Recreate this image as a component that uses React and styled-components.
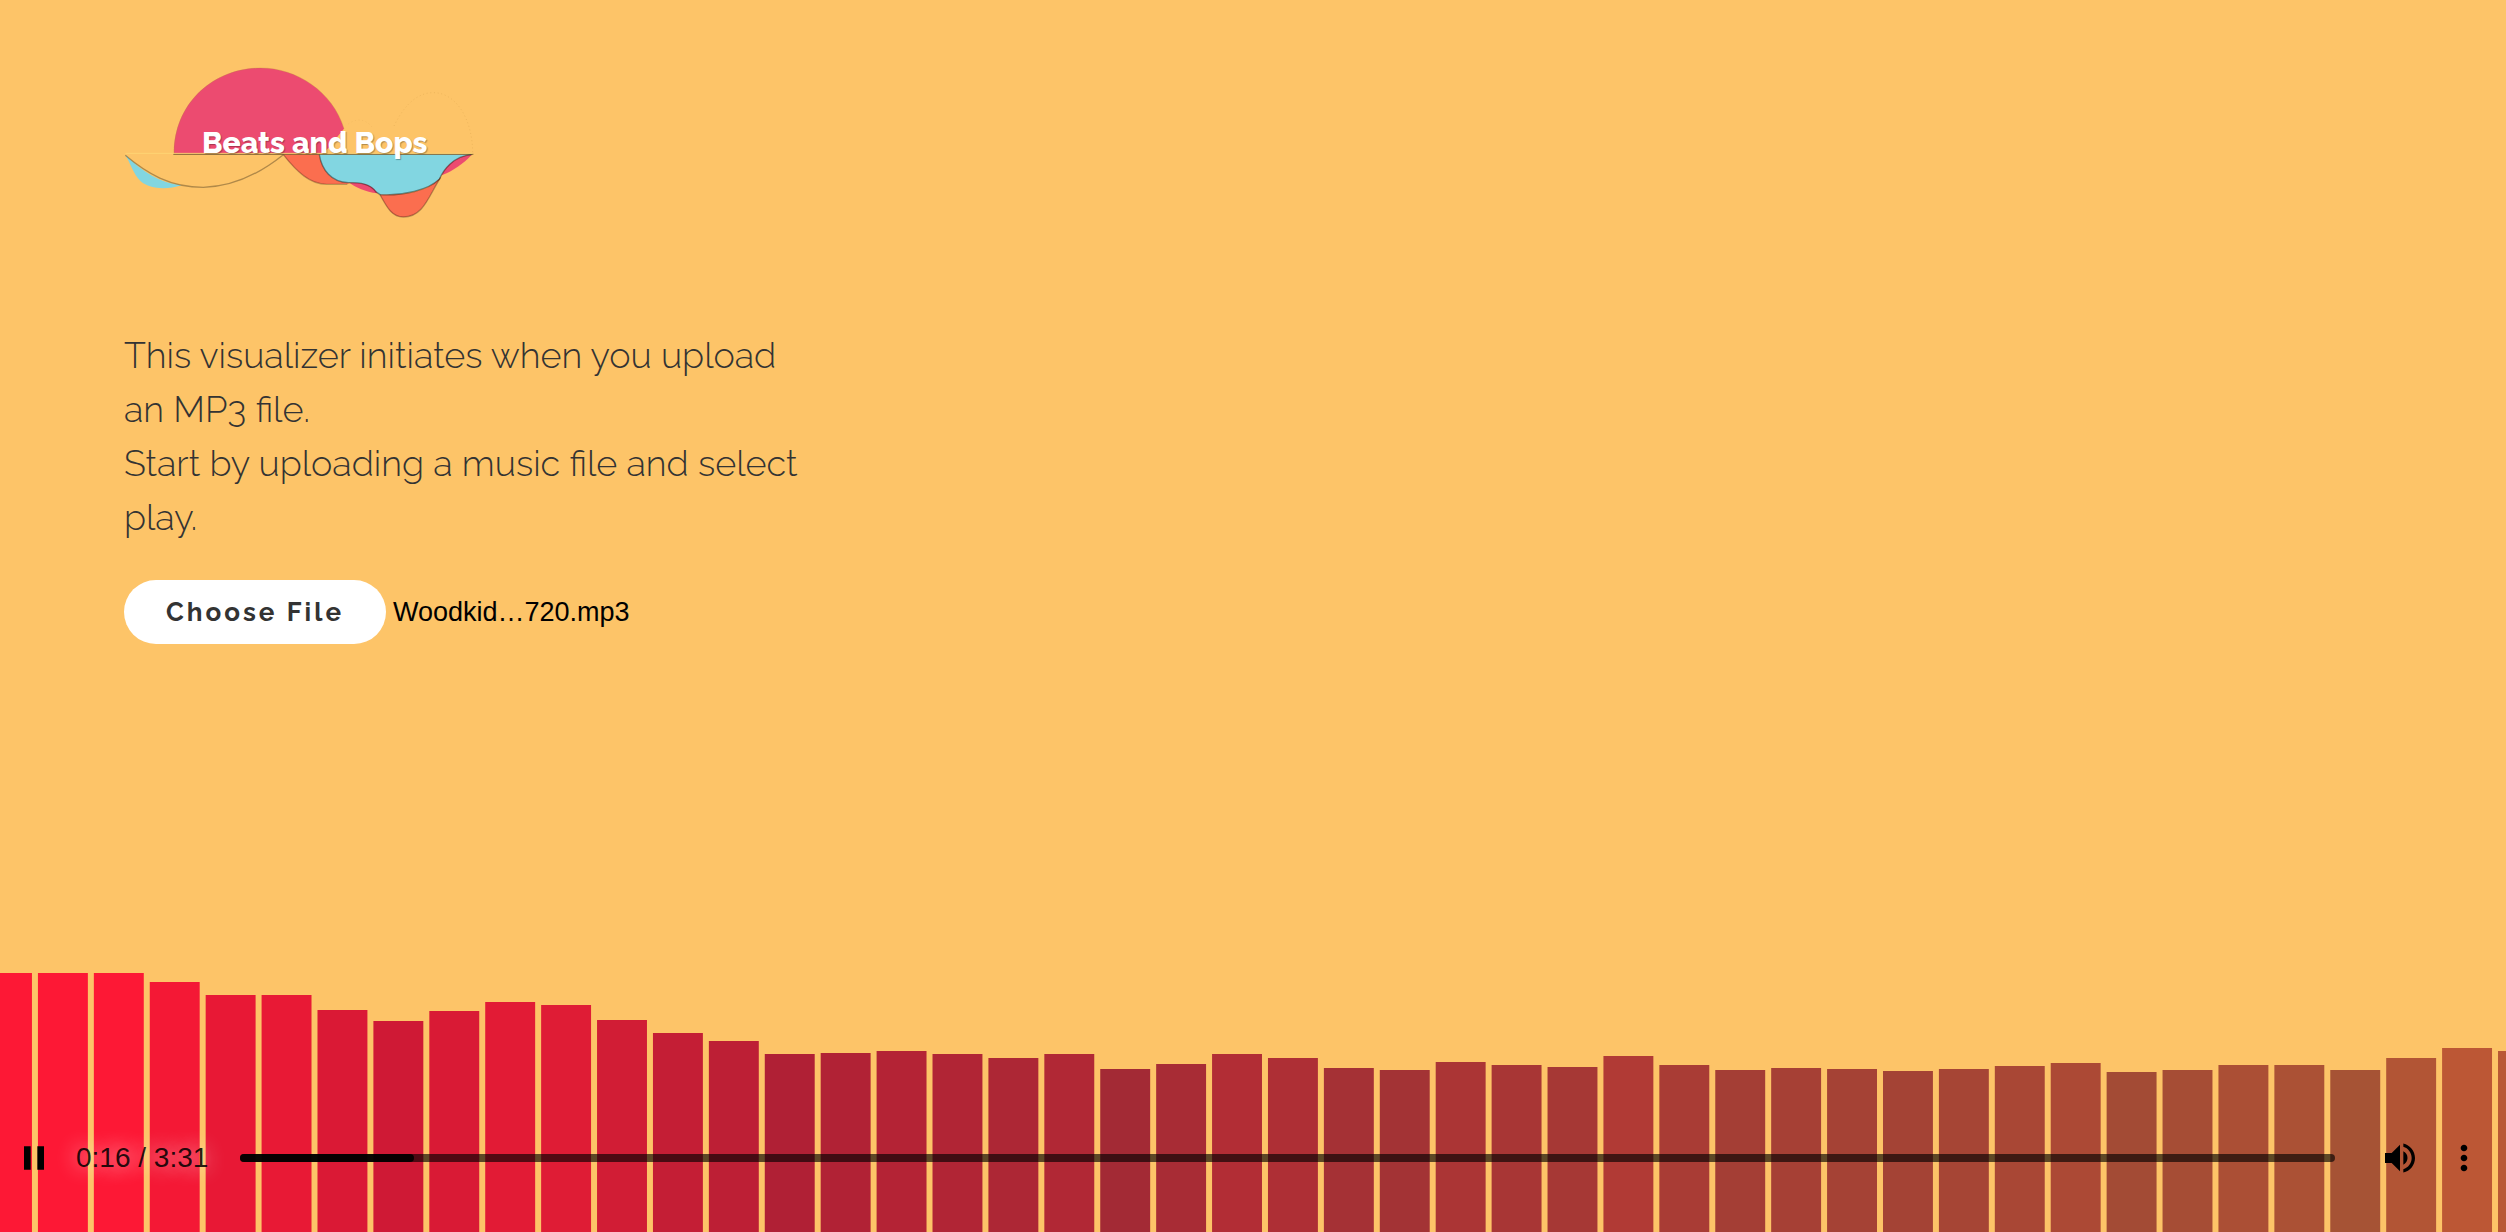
import React, { useRef, useState } from "react";
import styled, { createGlobalStyle } from "styled-components";
import { MdPause, MdPlayArrow, MdVolumeUp, MdVolumeOff, MdMoreVert } from "react-icons/md";

const GlobalStyle = createGlobalStyle`
  *, *::before, *::after { box-sizing: border-box; }
  body {
    margin: 0;
    background: #fdc468;
    font-family: Raleway, Lato, "Open Sans", sans-serif;
  }
`;

const Page = styled.div`
  min-height: 100vh;
  display: flex;
  flex-direction: column;
  justify-content: space-between;
  overflow: hidden;
`;

const Intro = styled.main`
  padding: 66px 124px 0;
`;

const Brand = styled.header`
  display: grid;
  width: max-content;

  > * { grid-area: 1 / 1; }
`;

const Artwork = styled.svg`
  display: block;
  width: 352px;
  height: 154px;
`;

const BrandName = styled.h1`
  margin: 0;
  padding: 59px 0 0 78px;
  color: #fff;
  font-size: 30px;
  line-height: 36px;
  font-weight: 800;
  text-shadow: 1px 1px 1px rgba(0, 0, 0, 0.3);
`;

const Lead = styled.p`
  max-width: 690px;
  margin: 108px 0 36px;
  color: #333;
  font-size: 36px;
  line-height: 54px;
  font-weight: 300;
`;

const Picker = styled.div`
  display: flex;
  align-items: center;
  gap: 7px;
`;

const PickButton = styled.button`
  width: 262px;
  height: 64px;
  border: 0;
  border-radius: 32px;
  background: #fff;
  color: #333;
  font: 700 26px/32px Raleway, Lato, "Open Sans", sans-serif;
  letter-spacing: 3px;
  cursor: pointer;
`;

const FileName = styled.output`
  color: #000;
  font: 27px/32px "Liberation Sans", Arial, sans-serif;
`;

const Stage = styled.section`
  display: grid;

  > * { grid-area: 1 / 1; }
`;

const Spectrum = styled.svg`
  display: block;
  width: 100%;
  height: 260px;
`;

const Controls = styled.div`
  align-self: end;
  position: relative;
  display: flex;
  align-items: center;
  padding: 0 10px 42px 2px;
`;

const IconButton = styled.button`
  display: grid;
  place-items: center;
  flex: none;
  width: 64px;
  height: 64px;
  padding: 0;
  border: 0;
  background: none;
  color: #000;
  font-size: 40px;
  cursor: pointer;
`;

const Time = styled.span`
  flex: none;
  width: 164px;
  padding-left: 10px;
  color: rgba(0, 0, 0, 0.87);
  font: 28px/32px "Liberation Sans", Arial, sans-serif;
  text-shadow: 0 0 20px rgba(255, 255, 255, 0.9);
  white-space: nowrap;
`;

const Timeline = styled.div`
  flex: 1;
  display: grid;
  height: 8px;
  margin: 0 33px 0 10px;
  border-radius: 4px;
  background: rgba(0, 0, 0, 0.63);

  > * { grid-area: 1 / 1; }
`;

const Played = styled.div`
  height: 8px;
  border-radius: 4px;
  background: rgba(0, 0, 0, 0.9);
`;

const Seek = styled.input`
  appearance: none;
  width: 100%;
  height: 8px;
  margin: 0;
  background: transparent;
  cursor: pointer;

  &::-webkit-slider-thumb {
    appearance: none;
    width: 8px;
    height: 8px;
    background: transparent;
  }
`;

const BAR_STEP = 56;
const BAR_WIDTH = 50;
const BINS = 128;

const levels = [
  259, 259, 259, 250, 237, 237, 222, 211, 221, 230, 227, 212, 199, 191, 178,
  179, 181, 178, 174, 178, 163, 168, 178, 174, 164, 162, 170, 167, 165, 176,
  167, 162, 164, 163, 161, 163, 166, 169, 160, 162, 167, 167, 162, 174, 184,
  181,
];

function barColor(level, i) {
  const red = Math.min(255, Math.round(level * 0.975 + (25 * i) / BINS));
  const green = Math.round(Math.cbrt(24 ** 3 + ((250 * i) / BINS) ** 3));
  return `rgb(${red}, ${green}, 53)`;
}

function Bars() {
  return (
    <Spectrum viewBox="0 0 2510 260" preserveAspectRatio="none" role="img" aria-label="Frequency spectrum">
      {levels.map((level, i) => (
        <rect
          key={i}
          x={i * BAR_STEP - 18}
          y={260 - level}
          width={BAR_WIDTH}
          height={level}
          fill={barColor(level, i)}
        />
      ))}
    </Spectrum>
  );
}

function Waves() {
  return (
    <Artwork viewBox="42 48 1056 462" aria-hidden="true" fill="none">
      <path d="M192 310C192 160 310 54 452 54C560 54 668 125 702 236C680 262 660 290 640 310Z" fill="#ec4b70" />
      <path d="M192 310C192 160 310 54 452 54C560 54 668 125 702 236" stroke="#b8863c" strokeOpacity=".45" strokeWidth="2" />
      <path d="M46 316C100 366 150 400 214 406C170 420 120 418 92 394C68 370 62 340 46 316Z" fill="#82d6e1" />
      <path d="M520 314C560 365 600 402 650 402L712 402L722 398C660 390 635 350 628 314Z" fill="#fb6e4f" />
      <path d="M628 314C635 360 665 397 715 398C750 398 780 400 797 425L810 434C880 438 955 420 988 388C1000 360 1030 318 1085 314Z" fill="#82d6e1" />
      <path d="M718 398C738 412 765 425 802 430C785 400 755 398 718 398Z" fill="#ec4b70" />
      <path d="M810 434C830 470 845 501 880 501C940 501 955 440 992 382C950 430 880 436 810 434Z" fill="#fb6e4f" />
      <path d="M1085 314C1040 318 1008 345 995 376C1030 362 1062 340 1085 314Z" fill="#ec4b70" />
      <g stroke="#000" strokeOpacity=".4" strokeWidth="4">
        <path d="M190 313H1090" />
        <path d="M46 316C110 370 180 412 280 412C370 410 450 370 520 314" strokeOpacity=".3" />
        <path d="M520 314C560 365 600 403 650 403H712" strokeOpacity=".25" />
        <path d="M628 314C635 360 665 397 715 398C750 398 780 400 797 425L810 434C880 438 955 420 988 388C1000 360 1030 318 1085 314" />
        <path d="M810 434C830 470 845 501 880 501C940 501 955 440 992 382" strokeOpacity=".28" />
      </g>
      <path d="M46 310H1088" stroke="#ffdc78" strokeWidth="2" />
      <g stroke="#c89440" strokeOpacity=".45" strokeWidth="2" strokeDasharray="3 8">
        <path d="M715 222C738 206 765 202 790 236" strokeOpacity=".25" />
        <path d="M852 228C885 160 925 128 970 128C1040 128 1088 210 1088 310" />
      </g>
    </Artwork>
  );
}

const formatTime = (s) => `${Math.floor(s / 60)}:${String(s % 60).padStart(2, "0")}`;

function Player() {
  const duration = 211;
  const [time, setTime] = useState(17.5);
  const [playing, setPlaying] = useState(true);
  const [muted, setMuted] = useState(false);

  return (
    <Controls>
      <IconButton type="button" aria-label={playing ? "Pause" : "Play"} onClick={() => setPlaying(!playing)}>
        {playing ? <MdPause /> : <MdPlayArrow />}
      </IconButton>
      <Time>
        {formatTime(Math.floor(time) - 1)} / {formatTime(duration)}
      </Time>
      <Timeline>
        <Played style={{ width: `${(time / duration) * 100}%` }} />
        <Seek
          type="range"
          aria-label="Seek"
          min="1"
          max={duration}
          step="any"
          value={time}
          onChange={(e) => setTime(Number(e.target.value))}
        />
      </Timeline>
      <IconButton type="button" aria-label="Mute" onClick={() => setMuted(!muted)}>
        {muted ? <MdVolumeOff /> : <MdVolumeUp />}
      </IconButton>
      <IconButton type="button" aria-label="More options">
        <MdMoreVert />
      </IconButton>
    </Controls>
  );
}

export default function App() {
  const fileRef = useRef(null);
  const [fileName, setFileName] = useState("Woodkid…720.mp3");

  return (
    <Page>
      <GlobalStyle />
      <Intro>
        <Brand>
          <Waves />
          <BrandName>Beats and Bops</BrandName>
        </Brand>
        <Lead>
          This visualizer initiates when you upload an MP3 file.
          <br />
          Start by uploading a music file and select play.
        </Lead>
        <Picker>
          <PickButton type="button" onClick={() => fileRef.current.click()}>
            Choose File
          </PickButton>
          <input
            ref={fileRef}
            type="file"
            accept="audio/mpeg"
            aria-label="Music file"
            hidden
            onChange={(e) => e.target.files[0] && setFileName(e.target.files[0].name)}
          />
          <FileName>{fileName}</FileName>
        </Picker>
      </Intro>
      <Stage>
        <Bars />
        <Player />
      </Stage>
    </Page>
  );
}
